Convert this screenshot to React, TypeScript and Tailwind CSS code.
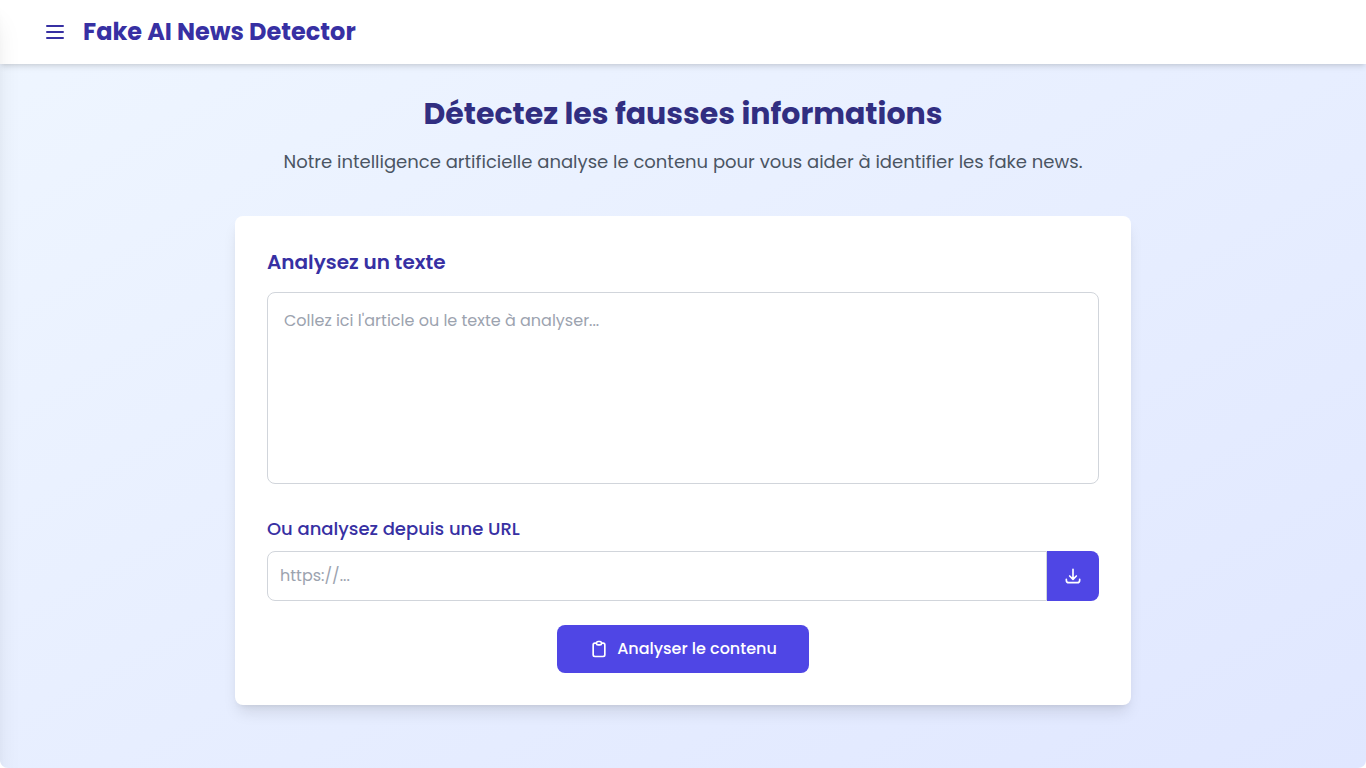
export default function App() {
  return (
    <div className="min-h-screen overflow-hidden bg-white font-['Poppins','Inter',sans-serif]">
      <div className="relative flex min-h-screen flex-col overflow-hidden rounded-b-lg bg-linear-to-br/srgb from-[#eff6ff] to-[#e0e7ff]">
        <aside
          aria-hidden="true"
          className="absolute inset-y-0 left-0 z-20 w-64 -translate-x-full bg-white shadow-[0_20px_25px_-5px_rgba(0,0,0,0.1),0_8px_10px_-6px_rgba(0,0,0,0.1)]"
        />

        <header className="z-10 bg-white shadow-[0_4px_6px_-1px_rgba(0,0,0,0.1),0_2px_4px_-2px_rgba(0,0,0,0.1)]">
          <div className="mx-auto flex h-16 max-w-7xl items-center gap-4">
            <button type="button" aria-label="Menu" className="text-[#3730a3]">
              <svg className="size-6" fill="none" viewBox="0 0 24 24" stroke="currentColor" strokeWidth="2" strokeLinecap="round" strokeLinejoin="round">
                <path d="M4 6h16M4 12h16M4 18h16" />
              </svg>
            </button>
            <span className="text-2xl font-bold text-[#3730a3]">Fake AI News Detector</span>
          </div>
        </header>

        <main className="mx-auto w-full max-w-4xl py-8">
          <div className="mb-10 text-center">
            <h1 className="mb-4 text-3xl font-bold text-[#312e81]">Détectez les fausses informations</h1>
            <p className="text-lg text-[#4b5563]">
              Notre intelligence artificielle analyse le contenu pour vous aider à identifier les fake news.
            </p>
          </div>

          <form
            onSubmit={(event) => event.preventDefault()}
            className="rounded-lg bg-white p-8 shadow-[0_10px_15px_-3px_rgba(0,0,0,0.1),0_4px_6px_-4px_rgba(0,0,0,0.1)]"
          >
            <h2 className="mb-4 text-xl font-semibold text-[#3730a3]">
              <label htmlFor="content">Analysez un texte</label>
            </h2>
            <textarea
              id="content"
              placeholder="Collez ici l'article ou le texte à analyser..."
              className="mb-[31px] block h-48 w-full resize-none rounded-lg border border-[#d1d5db] p-4 text-base placeholder:text-[#9ca3af]"
            />

            <label htmlFor="url" className="mb-2 block text-lg font-medium text-[#3730a3]">
              Ou analysez depuis une URL
            </label>
            <div className="mb-6 flex">
              <input
                id="url"
                type="url"
                placeholder="https://..."
                className="min-w-0 flex-1 rounded-l-lg border border-[#d1d5db] p-3 text-base placeholder:text-[#9ca3af]"
              />
              <button type="button" aria-label="Importer" className="rounded-r-lg bg-[#4f46e5] px-4 text-white">
                <svg className="size-5" fill="none" viewBox="0 0 24 24" stroke="currentColor" strokeWidth="2" strokeLinecap="round" strokeLinejoin="round">
                  <path d="M4 16v1a3 3 0 003 3h10a3 3 0 003-3v-1m-4-4l-4 4m0 0l-4-4m4 4V4" />
                </svg>
              </button>
            </div>

            <button type="submit" className="mx-auto flex h-12 items-center gap-2 rounded-lg bg-[#4f46e5] px-8 text-base font-medium text-white">
              <svg className="size-5" fill="none" viewBox="0 0 24 24" stroke="currentColor" strokeWidth="2" strokeLinecap="round" strokeLinejoin="round">
                <path d="M9 5H7a2 2 0 00-2 2v12a2 2 0 002 2h10a2 2 0 002-2V7a2 2 0 00-2-2h-2M9 5a2 2 0 002 2h2a2 2 0 002-2M9 5a2 2 0 012-2h2a2 2 0 012 2" />
              </svg>
              Analyser le contenu
            </button>
          </form>
        </main>
      </div>
    </div>
  );
}
